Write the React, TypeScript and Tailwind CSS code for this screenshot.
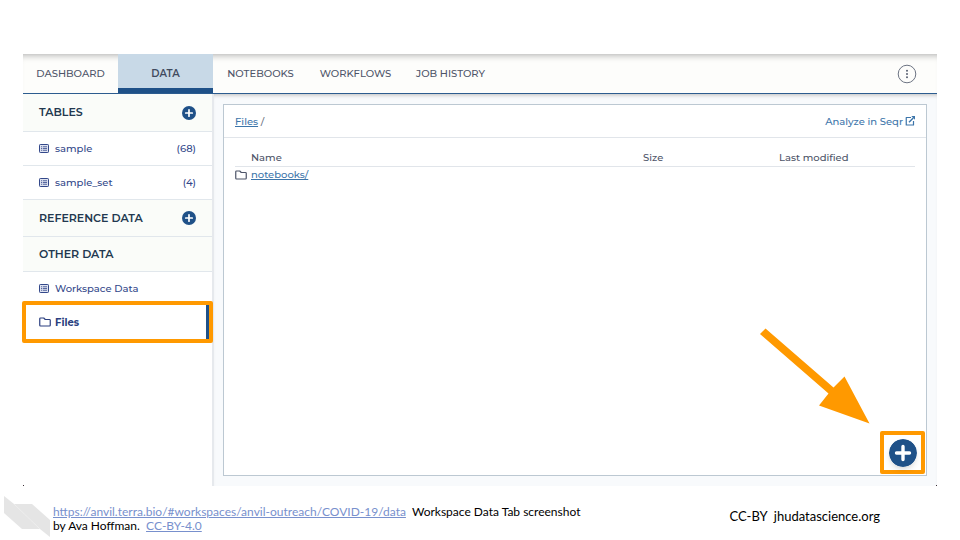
import type { ReactNode } from 'react';

type IconProps = { className?: string };

const TABS = ['DASHBOARD', 'DATA', 'NOTEBOOKS', 'WORKFLOWS', 'JOB HISTORY'];

const TABLES = [
  { name: 'sample', count: 68 },
  { name: 'sample_set', count: 4 },
];

function ListIcon({ className }: IconProps) {
  return (
    <svg viewBox="0 0 20 18" className={className} fill="none" stroke="currentColor" aria-hidden="true">
      <rect x="1" y="1" width="18" height="16" rx="1.5" fill="#dfe3f0" strokeWidth="2" />
      <path d="M4 5.5h2M4 9h2M4 12.5h2M7.5 5.5H16M7.5 9H16M7.5 12.5H16" strokeWidth="1.6" />
    </svg>
  );
}

function FolderIcon({ className }: IconProps) {
  return (
    <svg viewBox="0 0 24 20" className={className} fill="none" stroke="currentColor" aria-hidden="true">
      <path
        d="M3 2h6.5l3 3H21a1.5 1.5 0 0 1 1.5 1.5v10A1.5 1.5 0 0 1 21 18H3a1.5 1.5 0 0 1-1.5-1.5v-13A1.5 1.5 0 0 1 3 2z"
        strokeWidth="2.4"
        strokeLinejoin="round"
      />
    </svg>
  );
}

function PlusCircle({ className }: IconProps) {
  return (
    <svg viewBox="0 0 28 28" className={className} aria-hidden="true">
      <circle cx="14" cy="14" r="14" fill="#1f5188" />
      <path d="M14 7.5v13M7.5 14h13" stroke="#fff" strokeWidth="3.4" strokeLinecap="round" />
    </svg>
  );
}

function PopOutIcon({ className }: IconProps) {
  return (
    <svg viewBox="0 0 20 20" className={className} fill="none" stroke="currentColor" aria-hidden="true">
      <path d="M12 3H2.5v15H17v-8" strokeWidth="2.4" strokeLinejoin="round" />
      <path d="M8 12.5 16.5 4" strokeWidth="2.8" />
      <path d="M12.5 0H20v7.5z" fill="currentColor" stroke="none" />
    </svg>
  );
}

function MenuIcon({ className }: IconProps) {
  return (
    <svg viewBox="0 0 20 20" className={className} aria-hidden="true">
      <circle cx="10" cy="10" r="8.8" fill="none" stroke="#6d7483" />
      <circle cx="10" cy="6.8" r="1" fill="#5a6172" />
      <circle cx="10" cy="10" r="1" fill="#5a6172" />
      <circle cx="10" cy="13.2" r="1" fill="#5a6172" />
    </svg>
  );
}

function SectionHeader({ title, height, action }: { title: string; height: string; action?: boolean }) {
  return (
    <div className={`flex items-center justify-between border-b border-[#e1e7ec] bg-[#fafcf9] px-4 ${height}`}>
      <h2 className="text-[11px] font-semibold text-[#22384f]">{title}</h2>
      {action && (
        <button type="button" aria-label={`Add ${title.toLowerCase()}`}>
          <PlusCircle className="size-[14px]" />
        </button>
      )}
    </div>
  );
}

function SidebarRow({ icon, label, count }: { icon: ReactNode; label: string; count?: number }) {
  return (
    <a href="#data" className="flex h-[34px] items-center border-b border-[#e1e7ec] px-4 text-[10px] font-medium text-[#33488a]">
      <span className="w-4">{icon}</span>
      <span className="flex-1">{label}</span>
      {count !== undefined && <span>({count})</span>}
    </a>
  );
}

function Sidebar() {
  return (
    <aside className="w-[191px] shrink-0 border-r-2 border-[#e6e9ed] bg-white">
      <SectionHeader title="TABLES" height="h-[38px]" action />
      {TABLES.map((t) => (
        <SidebarRow key={t.name} icon={<ListIcon className="h-[9px] w-[10px]" />} label={t.name} count={t.count} />
      ))}
      <SectionHeader title="REFERENCE DATA" height="h-[37px]" action />
      <SectionHeader title="OTHER DATA" height="h-[35px]" />
      <a href="#workspace" className="flex h-[33px] items-center px-4 text-[10px] font-medium text-[#33488a]">
        <span className="w-4"><ListIcon className="h-[9px] w-[10px]" /></span>
        Workspace Data
      </a>
      <div className="relative">
        <a href="#files" className="flex h-[34px] items-center border-r-[6px] border-[#1f5188] px-4 text-[10px] font-bold text-[#2b3f80]">
          <span className="w-4"><FolderIcon className="h-[10px] w-3" /></span>
          Files
        </a>
        {/* callout around the selected row */}
        <div className="pointer-events-none absolute -inset-x-px -inset-y-1 rounded-[2px] border-4 border-[#ff9900]" />
      </div>
    </aside>
  );
}

function FilesPanel() {
  return (
    <section className="relative flex flex-1 flex-col border border-[#bcc8d2] bg-white">
      <div className="flex h-[33px] items-center justify-between border-b border-[#e1e5ea] px-[11px] text-[10px] font-medium">
        <div className="text-[#6d7483]">
          <a href="#files" className="text-[#3c75aa] underline">Files</a> /
        </div>
        <a href="#seqr" className="flex items-center gap-[2px] text-[#3c75aa]">
          Analyze in Seqr
          <PopOutIcon className="size-[10px]" />
        </a>
      </div>
      <div className="px-[11px] pt-3">
        <table className="w-full table-fixed text-left text-[10px] leading-4 text-[#4d5468]">
          <thead>
            <tr className="border-b border-[#e1e5ea]">
              <th className="w-4 p-0" aria-label="Type" />
              <th className="p-0 font-medium">Name</th>
              <th className="w-[20%] p-0 font-medium">Size</th>
              <th className="w-[20%] p-0 font-medium">Last modified</th>
            </tr>
          </thead>
          <tbody>
            <tr>
              <td className="p-0"><FolderIcon className="h-[10px] w-3" /></td>
              <td className="p-0"><a href="#notebooks" className="font-medium text-[#3c75aa] underline">notebooks/</a></td>
              <td />
              <td />
            </tr>
          </tbody>
        </table>
      </div>

      <button
        type="button"
        aria-label="Upload file"
        className="absolute right-px bottom-px flex h-[43px] w-[45px] items-center justify-center rounded-[2px] border-4 border-[#ff9900]"
      >
        <PlusCircle className="size-7 rounded-full shadow-md" />
      </button>
      <svg viewBox="0 0 110 96" className="pointer-events-none absolute right-14 bottom-[51px] h-24 w-[110px]" aria-hidden="true">
        <path d="M5.5 .5 73.500 59.500 84.500 48.500 109.500 95.500 59 77.500 68.500 65.500 0 6z" fill="#ff9900" />
      </svg>
    </section>
  );
}

function Footer() {
  return (
    <footer className="flex pr-20 pl-1 font-[Lato,sans-serif] text-black">
      <svg viewBox="0 0 46 42" className="mt-[10px] h-[42px] w-[46px] shrink-0" aria-hidden="true">
        <path d="M0 0v17l18 16h18l10 8V24L28 8H10z" fill="#e5e5e5" />
        <path d="M10 8l26 25" stroke="#f3f3f3" strokeWidth=".6" />
      </svg>
      <p className="mt-[19px] ml-[3px] text-[12px] leading-[14px]">
        <a href="#workspaces" className="text-[#7890cd] underline">https://anvil.terra.bio/#workspaces/anvil-outreach/COVID-19/data</a>
        {'\u00a0 '}Workspace Data Tab screenshot
        <br />
        by Ava Hoffman.{'\u00a0 '}
        <a href="#license" className="text-[#7890cd] underline">CC-BY-4.0</a>
      </p>
      <p className="mt-[22px] ml-auto text-[13px] leading-4">CC-BY{'\u00a0 '}jhudatascience.org</p>
    </footer>
  );
}

export default function App() {
  return (
    <div className="flex min-h-screen flex-col bg-white pt-[54px] font-[Montserrat,Inter,sans-serif]">
      <div className="relative mx-[23px] flex h-[80vh] flex-col">
        <header className="flex h-10 shrink-0 border-b border-[#2c5c8f] bg-[#fdfdfb] shadow-[inset_0_7px_7px_-6px_#aaa]">
          <nav className="flex text-[10px] font-medium text-[#4d5468]" aria-label="Workspace">
            {TABS.map((tab) => (
              <a
                key={tab}
                href="#tab"
                aria-current={tab === 'DATA' ? 'page' : undefined}
                className={`flex w-[95px] items-center justify-center ${
                  tab === 'DATA'
                    ? 'border-b-[5px] border-[#1f5188] bg-[#c8d9e7] pt-[5px] font-semibold text-[#404a5e]'
                    : ''
                }`}
              >
                {tab}
              </a>
            ))}
          </nav>
          <button type="button" aria-label="Workspace menu" className="mr-5 ml-auto">
            <MenuIcon className="size-5" />
          </button>
        </header>
        <main className="flex flex-1">
          <Sidebar />
          <div className="flex flex-1 bg-[#f8fafc] py-[10px] pr-[10px] pl-[9px] shadow-[inset_0_4px_4px_-3px_#bbb]">
            <FilesPanel />
          </div>
        </main>
        {/* dark window corners */}
        <span className="absolute bottom-0 left-0 size-px bg-[#3a2f35]" />
        <span className="absolute right-0 bottom-0 size-px bg-[#3a2f35]" />
      </div>
      <Footer />
    </div>
  );
}
